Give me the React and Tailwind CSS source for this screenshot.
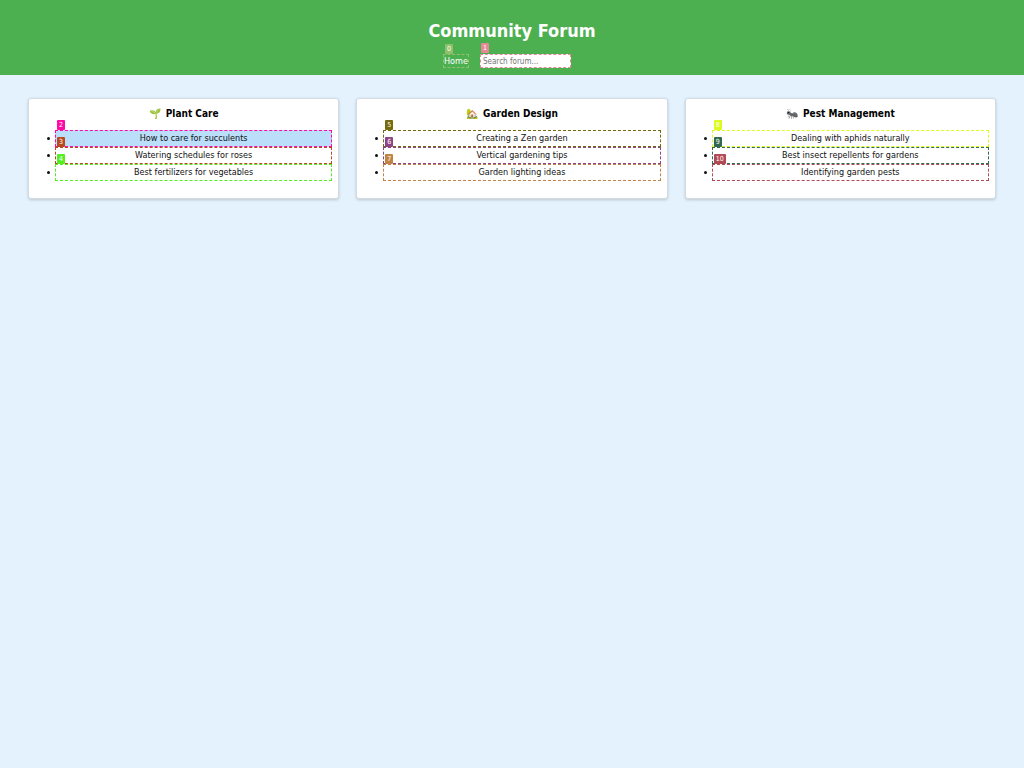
import React from "react";

const sections = [
  {
    icon: "🌱",
    title: "Plant Care",
    topics: [
      { id: 2, text: "How to care for succulents", outline: "border-[#ff0aa5]", tag: "bg-[#ff0aa5]", fill: "bg-[#bbdefb]" },
      { id: 3, text: "Watering schedules for roses", outline: "border-[#b84a20]", tag: "bg-[#b84a20]", fill: "" },
      { id: 4, text: "Best fertilizers for vegetables", outline: "border-[#55ee22]", tag: "bg-[#55ee22]", fill: "" },
    ],
  },
  {
    icon: "🏡",
    title: "Garden Design",
    topics: [
      { id: 5, text: "Creating a Zen garden", outline: "border-[#756b0c]", tag: "bg-[#756b0c]", fill: "" },
      { id: 6, text: "Vertical gardening tips", outline: "border-[#8c4484]", tag: "bg-[#8c4484]", fill: "" },
      { id: 7, text: "Garden lighting ideas", outline: "border-[#c28445]", tag: "bg-[#c28445]", fill: "" },
    ],
  },
  {
    icon: "🐜",
    title: "Pest Management",
    topics: [
      { id: 8, text: "Dealing with aphids naturally", outline: "border-[#dcfb1c]", tag: "bg-[#dcfb1c]", fill: "" },
      { id: 9, text: "Best insect repellents for gardens", outline: "border-[#31684f]", tag: "bg-[#31684f]", fill: "" },
      { id: 10, text: "Identifying garden pests", outline: "border-[#b04a54]", tag: "bg-[#b04a54]", fill: "" },
    ],
  },
];

function Tag({ id, color }) {
  return (
    <span className={`absolute bottom-full left-px z-10 mb-px rounded-[1px] px-[2px] text-[7px] leading-[10px] text-white ${color}`}>
      {id}
    </span>
  );
}

function Topic({ topic }) {
  return (
    <li>
      <div className={`relative -ml-[4px] border border-dashed leading-[15px] ${topic.outline} ${topic.fill}`}>
        <Tag id={topic.id} color={topic.tag} />
        {topic.text}
      </div>
    </li>
  );
}

function Section({ section }) {
  return (
    <section className="rounded-[3px] border border-[#d5dbe0] bg-white px-[6px] pt-[6px] pb-[17px] shadow-[0_1px_3px_rgba(0,0,0,0.18)]">
      <h2 className="flex items-center justify-center gap-[5px] text-[10px] leading-[18px] font-bold">
        <span aria-hidden="true">{section.icon}</span>
        <span>{section.title}</span>
      </h2>
      <ul className="mt-[7px] list-disc pl-[24px] text-[9px] leading-[17px] text-[#111]">
        {section.topics.map((topic) => (
          <Topic key={topic.id} topic={topic} />
        ))}
      </ul>
    </section>
  );
}

export default function App() {
  return (
    <div className="min-h-screen bg-[#e3f2fd] text-center font-['DejaVu_Sans_Condensed','DejaVu_Sans',sans-serif] text-black">
      <header className="bg-[#4caf50] pt-[19px] pb-[7px] text-white">
        <h1 className="text-[18px] leading-[24px] font-bold">Community Forum</h1>
        <nav className="mt-[11px] flex items-center justify-center gap-[11px] pr-[10px]">
          <a href="#home" className="relative border border-dashed border-[#92bf6b] text-[9px] leading-[12px]">
            <Tag id={0} color="bg-[#92bf6b]" />
            Home
          </a>
          <div className="relative flex">
            <Tag id={1} color="bg-[#e58996]" />
            <input
              type="text"
              aria-label="Search forum"
              placeholder="Search forum..."
              className="h-[14px] w-[91px] border border-dashed border-[#e58996] bg-white px-[2px] text-[8px] text-black placeholder:text-[#757575]"
            />
          </div>
        </nav>
      </header>
      <main className="grid grid-cols-3 gap-[17px] px-[28px] pt-[23px]">
        {sections.map((section) => (
          <Section key={section.title} section={section} />
        ))}
      </main>
    </div>
  );
}
